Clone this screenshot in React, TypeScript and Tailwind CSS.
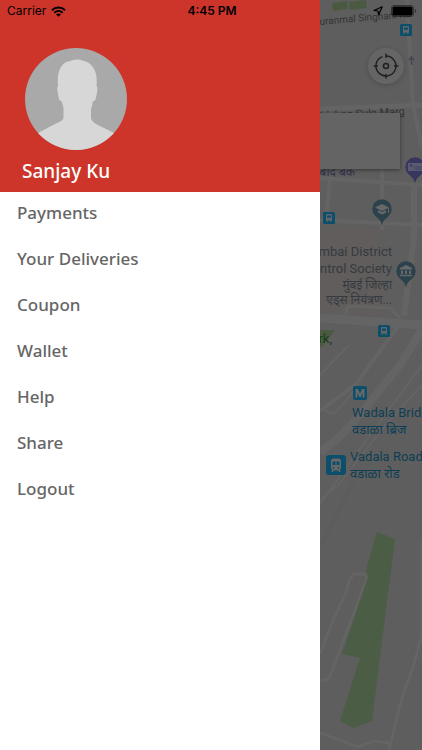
/**
 * Delivery app home: map view with the account drawer open
 */

interface MenuItem {
  label: string
  href: string
}

interface PinProps {
  x: number
  y: number
  color: string
  children: React.ReactNode
}

const menuItems: MenuItem[] = [
  { label: 'Payments', href: '#payments' },
  { label: 'Your Deliveries', href: '#deliveries' },
  { label: 'Coupon', href: '#coupon' },
  { label: 'Wallet', href: '#wallet' },
  { label: 'Help', href: '#help' },
  { label: 'Share', href: '#share' },
  { label: 'Logout', href: '#logout' },
]

function WifiIcon() {
  return (
    <svg viewBox="0 0 15 11" className="h-[11px] w-[15px]" aria-hidden="true">
      <g fill="none" stroke="#000" strokeWidth="1.9">
        <path d="M0.9 4.2 C4.6 0.6 10.4 0.6 14.1 4.2" />
        <path d="M3.3 6.7 C5.7 4.5 9.3 4.5 11.7 6.7" />
      </g>
      <path d="M7.5 10.8 L5.1 8.4 C6.4 7.2 8.6 7.2 9.9 8.4 Z" />
    </svg>
  )
}

function BatteryIcon() {
  return (
    <svg viewBox="0 0 26 12" className="h-3 w-[26px]" aria-hidden="true">
      <rect x="0.5" y="0.5" width="22" height="11" rx="2.6" fill="none" stroke="#000" strokeOpacity="0.45" />
      <rect x="1.5" y="1.5" width="20" height="9" rx="1.6" />
      <path d="M24 4 C25.6 4.6 25.6 7.4 24 8 Z" fillOpacity="0.5" />
    </svg>
  )
}

function StatusBar() {
  return (
    <div className="absolute inset-x-0 top-0 z-20 grid h-[22px] grid-cols-3 items-center pr-[5px] pl-[7px] font-['Inter',sans-serif] text-[12px] text-black">
      <div className="flex items-center gap-[5px]">
        <span>Carrier</span>
        <WifiIcon />
      </div>
      <span className="text-center font-semibold">4:45 PM</span>
      <div className="flex items-center justify-end gap-2">
        <svg viewBox="0 0 10 10" className="size-[10px]" aria-hidden="true">
          <path d="M9.2 0.8 L5.6 9 L5 5 L1 4.5 Z" fill="none" stroke="#000" strokeWidth="1.2" strokeLinejoin="round" />
        </svg>
        <BatteryIcon />
      </div>
    </div>
  )
}

function Avatar() {
  return (
    <svg viewBox="0 0 102 102" className="size-[102px]" role="img" aria-label="Profile photo">
      <clipPath id="avatar-circle">
        <circle cx="51" cy="51" r="51" />
      </clipPath>
      <g clipPath="url(#avatar-circle)">
        <rect width="102" height="102" fill="#a9a9a9" />
        <path
          d="M38.5 70 L38.5 60 C38 57 37 55 36.5 53 C34.500 53.500 33.500 50 33 46 C32 42 32 39 33 38 C32 27 34 20 39 15.500 C42 13 45 13.500 48 12 C52 11 56 11.500 59 13 C64 14 68 18 70 23 C72 28 72 33 71.500 38 C73 39 72.500 43 71.500 47 C71 51 70 53.500 68 53 C67.500 56 67 59 66 61 L66 70 C67 74 71 76 75 78 L91 86 L102 102 L0 102 L13 85 L30 76 C34 74 37.500 73 38.500 70 Z"
          fill="#d7d7d7"
        />
      </g>
    </svg>
  )
}

function Pin({ x, y, color, children }: PinProps) {
  return (
    <g transform={`translate(${x} ${y})`}>
      <path d="M0 16.500 C-1 11 -4 9.500 -6.500 7.200 A9.700 9.700 0 1 1 6.500 7.200 C4 9.500 1 11 0 16.500 Z" fill={color} />
      {children}
    </g>
  )
}

function BusStop({ x, y }: { x: number; y: number }) {
  return (
    <g transform={`translate(${x} ${y})`}>
      <rect width="12" height="12" rx="1.500" fill="#0b4f6b" />
      <path
        d="M3 3.200 Q3 2 4.200 2 H7.800 Q9 2 9 3.200 V8.500 H8.500 V9.800 H7.200 V8.500 H4.800 V9.800 H3.500 V8.500 H3 Z"
        fill="#666"
      />
      <rect x="4" y="3.500" width="4" height="2.300" fill="#0b4f6b" />
    </g>
  )
}

// Street map, already dimmed by the open drawer
function StreetMap() {
  return (
    <svg
      viewBox="320 0 102 750"
      preserveAspectRatio="xMinYMin slice"
      className="block h-full w-full font-['Roboto','Noto_Sans_Devanagari','Noto_Sans',sans-serif]"
      role="img"
      aria-label="Map of Wadala"
    >
      <rect x="320" width="2000" height="750" fill="#5e5e5e" />
      <path d="M320 225 L378 228 L385 316 L320 313 Z" fill="#605d5c" />

      {/* Roads */}
      <g fill="none" stroke="#646464">
        <path d="M320 109 L422 105" strokeWidth="5" />
        <path d="M407 0 L413 105 L422 148" strokeWidth="4" />
        <path d="M320 178 L422 185 M326 220 L330 180 M382 168 V230 M320 220 L422 225" strokeWidth="4" />
        <path d="M414 184 V238 L404 316" strokeWidth="6" />
        <path d="M320 318 L422 325" strokeWidth="9" />
        <path d="M345 316 L348 306 L390 308 L400 318" strokeWidth="3" />
        <path d="M422 330 L400 365 L366 407 Q340 440 320 452" strokeWidth="8" />
        <path d="M399 325 L356 384 L320 411" strokeWidth="4" />
        <path d="M320 375 L349 345 M320 409 L334 414 L355 390" strokeWidth="2" />
        <path d="M422 365 L376 427 L320 504 M422 385 L384 427 L339 484 L320 500" strokeWidth="2" />
        <path
          d="M320 654 L334 618 L346 593 Q348 580 354 574 H364 Q368 575 366 581 L352 618 L330 676 Q326 683 320 680"
          strokeWidth="3"
        />
        <path d="M422 540 V630 C418 660 407 680 400 705 L389 750" strokeWidth="3" />
        <path d="M320 733 L358 747 L374 741 L390 743" strokeWidth="3" />
      </g>
      <g fill="none" stroke="#555" strokeWidth="1" strokeDasharray="1 9">
        <path d="M402 342 L366 390 M422 350 L380 410 L340 465" />
        <path d="M354 480 L320 548" strokeDasharray="none" strokeOpacity="0.35" />
      </g>
      <path d="M411.500 57 V65 M409 60 L411.500 57 L414 60" fill="none" stroke="#434656" strokeWidth="1.500" />

      {/* Parks */}
      <path d="M332 3 L347 1 L348 9 L333 11 Z M349 2 L366 0 L367 8 L350 10 Z" fill="#4a5a41" />
      <path d="M320 330 H335 L323 346 L320 347 Z" fill="#4a5a41" />
      <path
        d="M377 532 L395 539 L383 633 L372 721 L353 728 L340 721 L360 658 L342 654 L368 577 L366 570 Z"
        fill="#4c5d45"
      />

      {/* Street labels */}
      <g fill="#353535">
        <text x="411" y="17" textAnchor="end" fontSize="10" transform="rotate(-5 411 17)">
          Puranmal Singhani Rd
        </text>
        <text x="405" y="115" textAnchor="end" fontSize="11" transform="rotate(-3 405 115)">
          Krishna Sule Marg
        </text>
      </g>

      {/* Place labels */}
      <text x="355" y="176" textAnchor="end" fontSize="12" fill="#32324a">
        लाहाबाद बँक
      </text>
      <g fill="#353b40" textAnchor="end" fontSize="13">
        <text x="392" y="256">Mumbai District</text>
        <text x="392" y="273">Control Society</text>
        <text x="392" y="289" fontSize="12">
          मुंबई जिल्हा
        </text>
        <text x="392" y="304" fontSize="12">
          एड्स नियंत्रण...
        </text>
      </g>
      <text x="332" y="343" textAnchor="end" fontSize="13" fill="#173d17">
        Park,
      </text>
      <g fill="#0d3e55" fontSize="13">
        <text x="352" y="417">Wadala Bridge</text>
        <text x="352" y="434">वडाळा ब्रिज</text>
        <text x="350" y="461">Vadala Road</text>
        <text x="350" y="478">वडाळा रोड</text>
      </g>

      {/* Transit stops */}
      <BusStop x={400} y={24} />
      <BusStop x={323} y={212} />
      <BusStop x={378} y={325} />
      <rect x="353" y="386" width="14" height="14" rx="2" fill="#0b4f6b" />
      <path
        d="M355.500 397.500 V389 H358 L360 393.800 L362 389 H364.500 V397.500 H362.600 V392.500 L360.700 397 H359.300 L357.400 392.500 V397.500 Z"
        fill="#686868"
      />
      <rect x="326" y="455" width="20" height="20" rx="3" fill="#0b4f6b" />
      <path
        d="M331 461 Q331 458.500 333.500 458.500 H338.500 Q341 458.500 341 461 V468 Q341 469.500 339.500 470 L341 472 H339 L338 470.500 H334 L333 472 H331 L332.500 470 Q331 469.500 331 468 Z"
        fill="#686868"
      />
      <path d="M332.500 461.500 H335.500 V465 H332.500 Z M336.500 461.500 H339.500 V465 H336.500 Z" fill="#0b4f6b" />
      <circle cx="333.500" cy="467.800" r="0.900" fill="#0b4f6b" />
      <circle cx="338.500" cy="467.800" r="0.900" fill="#0b4f6b" />

      {/* Pins */}
      <Pin x={415} y={167} color="#36365e">
        <rect x="-7" y="-4" width="15" height="8" fill="#5a5a70" />
        <circle cx="-4" cy="-1.500" r="1.200" fill="#36365e" />
        <text x="-2" y="3" fontSize="5" fill="#36365e">
          100
        </text>
      </Pin>
      <Pin x={382} y={209} color="#2b414b">
        <path d="M0 -5 L7 -1.500 L0 2 L-7 -1.500 Z M-4 1 L0 3 L4 1 V3.500 L0 5.500 L-4 3.500 Z M6 -1 H7 V4 H6 Z" fill="#686868" />
      </Pin>
      <Pin x={406} y={271} color="#2b414b">
        <path
          d="M0 -6 L6 -3 V-1.500 H-6 V-3 Z M-5 -0.500 H-3 V3 H-5 Z M-1 -0.500 H1 V3 H-1 Z M3 -0.500 H5 V3 H3 Z M-6 3.800 H6 V5.300 H-6 Z"
          fill="#686868"
        />
      </Pin>
    </svg>
  )
}

function LocateButton() {
  return (
    <button
      type="button"
      aria-label="Show my location"
      className="absolute top-12 left-12 flex size-9 items-center justify-center rounded-full bg-[#656565] shadow-[0_1px_5px_rgba(0,0,0,0.2)]"
    >
      <svg viewBox="0 0 26 26" className="size-[26px]" fill="none" stroke="#202020" strokeWidth="1.400">
        <path d="M13 3 A10 10 0 1 1 9.500 3.600" />
        <circle cx="13" cy="13" r="2.500" strokeWidth="1.600" />
        <path d="M13 0.500 V5 M13 21 V25.500 M0.500 13 H5 M21 13 H25.500" />
      </svg>
    </button>
  )
}

function Drawer() {
  return (
    <aside className="z-10 flex w-80 shrink-0 flex-col bg-white font-['Noto_Sans',sans-serif]">
      <header className="flex flex-col bg-[#cd352b] px-[22px] pt-12 pb-1">
        <div className="pl-[3px]">
          <Avatar />
        </div>
        <h1 className="pt-1 text-[19px] leading-[34px] font-medium text-white">Sanjay Ku</h1>
      </header>
      <nav aria-label="Account">
        <ul>
          {menuItems.map((item) => (
            <li key={item.label}>
              <a
                href={item.href}
                className="flex h-[46px] items-center px-[17px] pb-1 text-[17px] leading-6 font-medium text-[#666]"
              >
                {item.label}
              </a>
            </li>
          ))}
        </ul>
      </nav>
    </aside>
  )
}

export default function App() {
  return (
    <div className="relative flex h-screen min-h-[530px] overflow-hidden bg-[#5e5e5e]">
      <StatusBar />
      <Drawer />
      <main className="relative min-w-0 flex-1">
        <StreetMap />
        <div className="absolute top-[113px] right-[22px] left-0 h-14 bg-[#646464] shadow-[0_1px_4px_rgba(0,0,0,0.45)]" />
        <LocateButton />
      </main>
    </div>
  )
}
